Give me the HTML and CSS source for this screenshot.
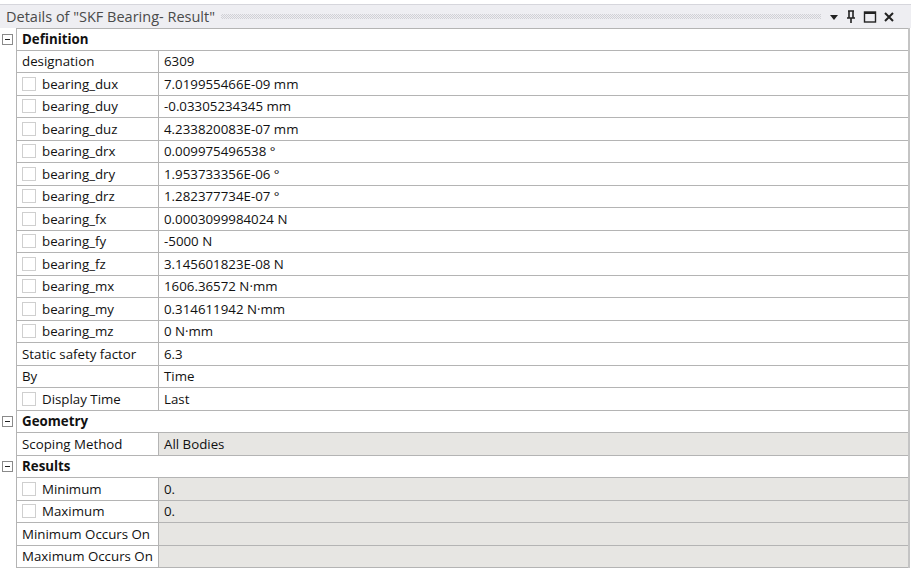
FILE: index.html
```html
<!DOCTYPE html>
<html>
<head>
<meta charset="utf-8">
<link rel="stylesheet" href="styles.css">
</head>
<body>
<div class="panel">
  <div class="titlebar">
    <span class="title">Details of "SKF Bearing- Result"</span>
    <span class="dots"></span>
    <span class="tools">
      <svg width="10" height="10" viewBox="0 0 10 10"><path d="M1 3h8L5 8z" fill="#222"/></svg>
      <svg width="12" height="14" viewBox="0 0 12 14"><path d="M3 1h6M4 1v7M8 1v7M2 8h8M6 8v5" stroke="#222" stroke-width="1.6" fill="none"/></svg>
      <svg width="14" height="14" viewBox="0 0 14 14"><rect x="1.5" y="2" width="11" height="10" fill="none" stroke="#222" stroke-width="1.4"/><path d="M1.5 3h11" stroke="#222" stroke-width="2"/></svg>
      <svg width="12" height="12" viewBox="0 0 12 12"><path d="M2 2l8 8M10 2l-8 8" stroke="#222" stroke-width="2"/></svg>
    </span>
  </div>
  <div class="grid">
    <div class="row cat"><div class="gut"><span class="tog"></span></div><div class="c catlabel">Definition</div></div>
    <div class="row"><div class="gut"></div><div class="c k">designation</div><div class="c v">6309</div></div>
    <div class="row"><div class="gut"></div><div class="c k"><span class="cb"></span>bearing_dux</div><div class="c v">7.019955466E-09 mm</div></div>
    <div class="row"><div class="gut"></div><div class="c k"><span class="cb"></span>bearing_duy</div><div class="c v">-0.03305234345 mm</div></div>
    <div class="row"><div class="gut"></div><div class="c k"><span class="cb"></span>bearing_duz</div><div class="c v">4.233820083E-07 mm</div></div>
    <div class="row"><div class="gut"></div><div class="c k"><span class="cb"></span>bearing_drx</div><div class="c v">0.009975496538 °</div></div>
    <div class="row"><div class="gut"></div><div class="c k"><span class="cb"></span>bearing_dry</div><div class="c v">1.953733356E-06 °</div></div>
    <div class="row"><div class="gut"></div><div class="c k"><span class="cb"></span>bearing_drz</div><div class="c v">1.282377734E-07 °</div></div>
    <div class="row"><div class="gut"></div><div class="c k"><span class="cb"></span>bearing_fx</div><div class="c v">0.0003099984024 N</div></div>
    <div class="row"><div class="gut"></div><div class="c k"><span class="cb"></span>bearing_fy</div><div class="c v">-5000 N</div></div>
    <div class="row"><div class="gut"></div><div class="c k"><span class="cb"></span>bearing_fz</div><div class="c v">3.145601823E-08 N</div></div>
    <div class="row"><div class="gut"></div><div class="c k"><span class="cb"></span>bearing_mx</div><div class="c v">1606.36572 N·mm</div></div>
    <div class="row"><div class="gut"></div><div class="c k"><span class="cb"></span>bearing_my</div><div class="c v">0.314611942 N·mm</div></div>
    <div class="row"><div class="gut"></div><div class="c k"><span class="cb"></span>bearing_mz</div><div class="c v">0 N·mm</div></div>
    <div class="row"><div class="gut"></div><div class="c k">Static safety factor</div><div class="c v">6.3</div></div>
    <div class="row"><div class="gut"></div><div class="c k">By</div><div class="c v">Time</div></div>
    <div class="row"><div class="gut"></div><div class="c k"><span class="cb"></span>Display Time</div><div class="c v">Last</div></div>
    <div class="row cat"><div class="gut"><span class="tog"></span></div><div class="c catlabel">Geometry</div></div>
    <div class="row"><div class="gut"></div><div class="c k">Scoping Method</div><div class="c v ro">All Bodies</div></div>
    <div class="row cat"><div class="gut"><span class="tog"></span></div><div class="c catlabel">Results</div></div>
    <div class="row"><div class="gut"></div><div class="c k"><span class="cb"></span>Minimum</div><div class="c v ro">0.</div></div>
    <div class="row"><div class="gut"></div><div class="c k"><span class="cb"></span>Maximum</div><div class="c v ro">0.</div></div>
    <div class="row"><div class="gut"></div><div class="c k">Minimum Occurs On</div><div class="c v ro"></div></div>
    <div class="row"><div class="gut"></div><div class="c k">Maximum Occurs On</div><div class="c v ro"></div></div>
  </div>
</div>
</body>
</html>
```

FILE: styles.css
```css
html, body {
  margin: 0;
  padding: 0;
  background: #ffffff;
}
body {
  font-family: "Open Sans", "Noto Sans", "DejaVu Sans", sans-serif;
  color: #111111;
  width: 911px;
  height: 574px;
  overflow: hidden;
}
.panel {
  padding-top: 4px;
}
.titlebar {
  height: 24px;
  border-top: 1px solid #d6d6dc;
  background: #eeeef2;
  display: flex;
  align-items: center;
  padding-left: 6px;
  padding-right: 16px;
  box-sizing: border-box;
}
.title {
  font-size: 14.5px;
  color: #4a4a4a;
  white-space: nowrap;
}
.dots {
  flex: 1;
  height: 5px;
  margin: 0 8px 0 6px;
  background-image:
    linear-gradient(45deg, #c9c9cf 25%, transparent 25%, transparent 75%, #c9c9cf 75%),
    linear-gradient(45deg, #c9c9cf 25%, transparent 25%, transparent 75%, #c9c9cf 75%);
  background-size: 2px 2px;
  background-position: 0 0, 1px 1px;
  opacity: 0.8;
}
.tools {
  display: flex;
  align-items: center;
  gap: 6px;
}
.tools svg { display: block; }
.grid {
  width: 910px;
  border-right: 2px solid #c4c4c4;
  box-sizing: border-box;
}
.row {
  display: flex;
  height: 22.5px;
}
.gut {
  width: 16px;
  flex: none;
  display: flex;
  align-items: center;
  justify-content: center;
  background: #ffffff;
}
.tog {
  width: 9px;
  height: 9px;
  border: 1px solid #8a8a8a;
  position: relative;
  background: #fff;
  margin-left: -1px;
}
.tog::after {
  content: "";
  position: absolute;
  left: 2px;
  right: 2px;
  top: 4px;
  height: 1px;
  background: #222;
}
.c {
  box-sizing: border-box;
  border-left: 1px solid #b4b4b4;
  border-bottom: 1.5px solid #b4b4b4;
  display: flex;
  align-items: center;
  font-size: 13.3px;
  white-space: nowrap;
  overflow: hidden;
  background: #ffffff;
}
.row:first-child .c { border-top: 1.5px solid #b4b4b4; }
.k {
  width: 142px;
  flex: none;
  padding-left: 5px;
}
.v {
  flex: 1;
  padding-left: 5px;
}
.v.ro { background: #e7e6e3; }
.catlabel {
  flex: 1;
  font-weight: bold;
  padding-left: 5px;
}
.cb {
  width: 14px;
  height: 14px;
  border: 1px solid #cfcfcf;
  box-sizing: border-box;
  background: #fff;
  margin-right: 6px;
  flex: none;
}
```
